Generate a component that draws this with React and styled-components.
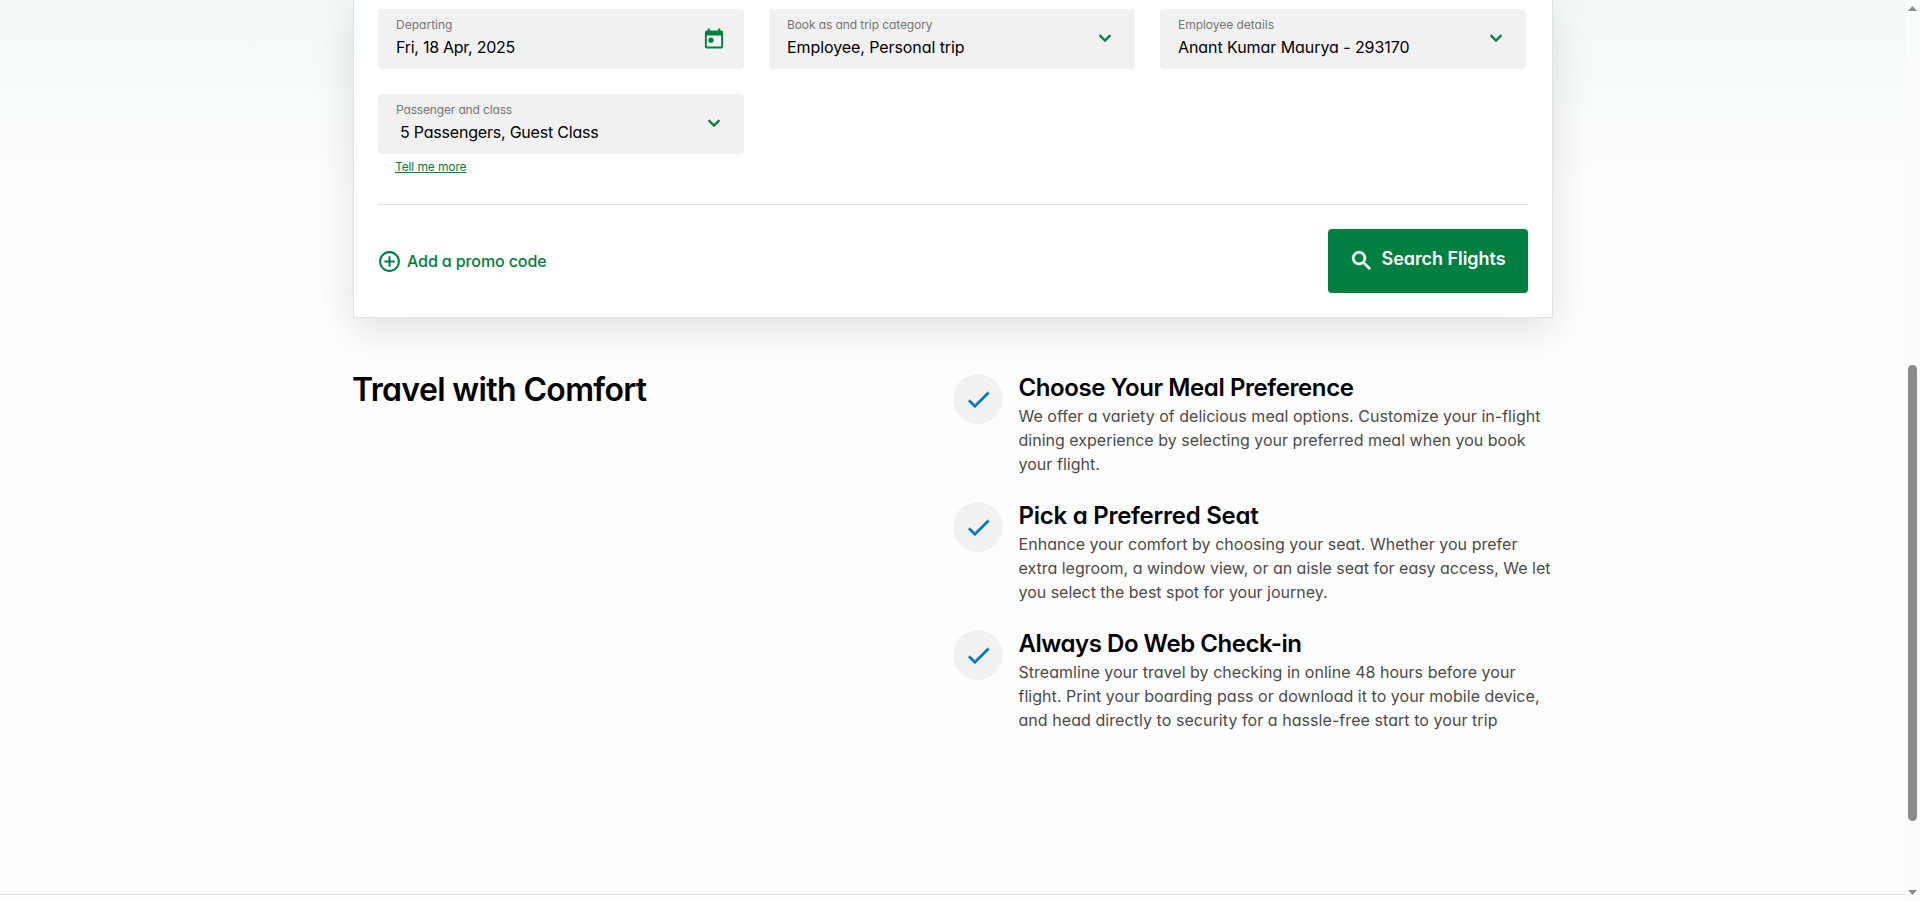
import React from 'react';
import styled, { createGlobalStyle } from 'styled-components';

const GlobalStyle = createGlobalStyle`
  * { box-sizing: border-box; }
  body {
    margin: 0;
    overflow: hidden;
    background: #fefefe;
    font-family: Inter, "Liberation Sans", sans-serif;
    font-feature-settings: "cv11";
    color: #000;
  }
`;

const Screen = styled.div`
  display: flex;
  height: 901px;
`;

const Page = styled.div`
  flex: 1;
  display: flex;
  flex-direction: column;
  background: linear-gradient(#f1f9f7 0, #f8fcfb 100px, #fefefe 200px);
`;

const Content = styled.main`
  width: 1200px;
  flex: 1;
  margin-left: 353px;
  display: flex;
  flex-direction: column;
`;

const Footer = styled.footer`
  height: 7px;
  border-top: 1px solid #e0e0e0;
`;

const Card = styled.section`
  height: 318px;
  padding: 9px 24px 24px;
  border: 1px solid #e3e3e3;
  border-top: 0;
  background: #fff;
  box-shadow: 0 12px 40px rgba(0, 0, 0, 0.12);
`;

const Fields = styled.div`
  display: grid;
  grid-template-columns: repeat(3, 366px);
  gap: 25px;
`;

const Field = styled.div`
  display: flex;
  justify-content: space-between;
  height: 60px;
  padding: 8px 18px;
  border-radius: 4px;
  background: #f1f1f1;
  white-space: nowrap;
`;

const FieldText = styled.div`
  display: flex;
  flex-direction: column;
  gap: 4px;
`;

const Label = styled.span`
  font-size: 12px;
  line-height: 16px;
  letter-spacing: ${(p) => p.$spacing}px;
  color: #757575;
`;

const Value = styled.span`
  font-size: 16px;
  line-height: 20px;
  letter-spacing: ${(p) => p.$spacing}px;
  padding-left: ${(p) => (p.$indent ? 4 : 0)}px;
`;

const FieldIcon = styled.svg`
  width: 24px;
  height: 24px;
  margin: ${(p) => (p.$raised ? 9 : 10)}px 0 0;
  fill: #008040;
  stroke: #008040;
  stroke-width: ${(p) => (p.$raised ? 0.4 : 0)};
`;

const TellMore = styled.a`
  display: block;
  width: max-content;
  margin: 5px 0 29px 17px;
  font-size: 12px;
  line-height: 16px;
  letter-spacing: -0.117px;
  color: #008040;
  text-decoration: underline;
  text-underline-offset: 1px;
`;

const Actions = styled.div`
  display: flex;
  align-items: center;
  justify-content: space-between;
  padding-top: 24px;
  border-top: 1px solid #e0e0e0;
`;

const Promo = styled.a`
  display: flex;
  align-items: center;
  gap: 5px;
  margin-left: -1px;
  font-size: 16px;
  font-weight: 500;
  line-height: 24px;
  letter-spacing: -0.105px;
  color: #008040;
`;

const PromoIcon = styled.svg`
  width: 25px;
  height: 25px;
  fill: #008040;
`;

const SearchButton = styled.button`
  display: flex;
  align-items: center;
  gap: 7px;
  width: 200px;
  height: 64px;
  padding: 0 0 0 21px;
  border: 0;
  border-radius: 4px;
  background: #008040;
  color: #fff;
  font: 600 18px/24px Inter, "Liberation Sans", sans-serif;
  font-feature-settings: "cv11";
  letter-spacing: -0.055px;
`;

const SearchLabel = styled.span`
  margin-bottom: 5px;
`;

const SearchIcon = styled.svg`
  width: 25.5px;
  height: 25.5px;
  fill: #fff;
  stroke: #fff;
  stroke-width: 0.6;
`;

const Comfort = styled.section`
  display: grid;
  grid-template-columns: 600px 600px;
  padding-top: 56px;
`;

const Title = styled.h2`
  margin: 0 0 0 -1px;
  font-size: 32px;
  font-weight: 600;
  line-height: 32px;
  letter-spacing: -0.64px;
`;

const Features = styled.div`
  display: flex;
  flex-direction: column;
  gap: 26px;
`;

const Feature = styled.article`
  display: flex;
  gap: 15.5px;
`;

const CheckCircle = styled.div`
  display: flex;
  flex: none;
  align-items: center;
  justify-content: center;
  width: 50px;
  height: 50px;
  padding-top: 1px;
  border-radius: 50%;
  background: #f1f1f1;
`;

const CheckIcon = styled.svg`
  width: 29px;
  height: 29px;
  fill: #0078be;
  stroke: #0078be;
  stroke-width: 0.3;
`;

const FeatureText = styled.div`
  display: flex;
  flex-direction: column;
  white-space: nowrap;
`;

const FeatureTitle = styled.h3`
  margin: 0 0 2px;
  font-size: 24px;
  font-weight: 600;
  line-height: 28px;
  letter-spacing: ${(p) => p.$spacing}px;
`;

const Line = styled.span`
  font-size: 16px;
  line-height: 24px;
  letter-spacing: ${(p) => p.$spacing}px;
  color: #4b4b4b;
`;

const ScrollTrack = styled.div`
  display: flex;
  flex-direction: column;
  align-items: center;
  width: 15px;
  padding: 6px 0 6px;
  background: #fcfcfc;
`;

const Arrow = styled.svg`
  width: 9px;
  height: 5px;
  margin-top: ${(p) => (p.$last ? 'auto' : 0)};
  fill: #8b8b8b;
`;

const Thumb = styled.div`
  width: 9px;
  height: 456px;
  margin-top: 354px;
  border-radius: 5px;
  background: #8b8b8b;
`;

const ChevronDown = () => (
  <FieldIcon $raised viewBox="0 0 24 24">
    <path d="M16.59 8.59 12 13.17 7.41 8.59 6 10l6 6 6-6z" />
  </FieldIcon>
);

const Calendar = () => (
  <FieldIcon viewBox="0 0 24 24">
    <path d="M19 3.6h-.8V1.4h-2v2.2H7.8V1.4h-2v2.2H5A2 2 0 0 0 2.9 5.6v13.9a2 2 0 0 0 2.1 2h14a2 2 0 0 0 2.1-2V5.6A2 2 0 0 0 19 3.6zm.2 16H4.8V8.6h14.4z" />
    <circle cx="9" cy="13.2" r="2.6" />
  </FieldIcon>
);

const fields = [
  { label: 'Departing', ls: 0.017, value: 'Fri, 18 Apr, 2025', vs: -0.262, Icon: Calendar },
  { label: 'Book as and trip category', ls: -0.088, value: 'Employee, Personal trip', vs: -0.081, Icon: ChevronDown },
  { label: 'Employee details', ls: -0.029, value: 'Anant Kumar Maurya - 293170', vs: -0.066, Icon: ChevronDown },
  { label: 'Passenger and class', ls: -0.152, value: '5 Passengers, Guest Class', vs: -0.208, indent: true, Icon: ChevronDown },
];

const features = [
  {
    title: 'Choose Your Meal Preference',
    spacing: -0.406,
    lines: [
      ['We offer a variety of delicious meal options. Customize your in-flight', 0.021],
      ['dining experience by selecting your preferred meal when you book', 0.01],
      ['your flight.', 0.038],
    ],
  },
  {
    title: 'Pick a Preferred Seat',
    spacing: -0.254,
    lines: [
      ['Enhance your comfort by choosing your seat. Whether you prefer', 0.035],
      ['extra legroom, a window view, or an aisle seat for easy access, We let', -0.014],
      ['you select the best spot for your journey.', -0.021],
    ],
  },
  {
    title: 'Always Do Web Check-in',
    spacing: -0.472,
    lines: [
      ['Streamline your travel by checking in online 48 hours before your', 0.031],
      ['flight. Print your boarding pass or download it to your mobile device,', 0.035],
      ['and head directly to security for a hassle-free start to your trip', 0.059],
    ],
  },
];

export default function App() {
  return (
    <Screen>
      <GlobalStyle />
      <Page>
        <Content>
          <Card>
            <Fields>
              {fields.map(({ label, ls, value, vs, indent, Icon }) => (
                <Field key={label}>
                  <FieldText>
                    <Label $spacing={ls}>{label}</Label>
                    <Value $spacing={vs} $indent={indent}>{value}</Value>
                  </FieldText>
                  <Icon />
                </Field>
              ))}
            </Fields>
            <TellMore>Tell me more</TellMore>
            <Actions>
              <Promo>
                <PromoIcon viewBox="0 0 24 24">
                  <path d="M13 7h-2v4H7v2h4v4h2v-4h4v-2h-4V7zm-1-5C6.48 2 2 6.48 2 12s4.480 10 10 10 10-4.480 10-10S17.520 2 12 2zm0 18c-4.410 0-8-3.590-8-8s3.590-8 8-8 8 3.590 8 8-3.590 8-8 8z" />
                </PromoIcon>
                Add a promo code
              </Promo>
              <SearchButton>
                <SearchIcon viewBox="0 0 24 24">
                  <path d="M15.5 14h-.79l-.28-.27A6.471 6.471 0 0 0 16 9.5 6.5 6.5 0 1 0 9.5 16c1.61 0 3.09-.59 4.23-1.57l.27.28v.79l5 4.99L20.49 19l-4.99-5zm-6 0C7.01 14 5 11.99 5 9.5S7.01 5 9.5 5 14 7.01 14 9.5 11.99 14 9.5 14z" />
                </SearchIcon>
                <SearchLabel>Search Flights</SearchLabel>
              </SearchButton>
            </Actions>
          </Card>
          <Comfort>
            <Title>Travel with Comfort</Title>
            <Features>
              {features.map((feature) => (
                <Feature key={feature.title}>
                  <CheckCircle>
                    <CheckIcon viewBox="0 0 24 24">
                      <path d="M9 16.17 4.83 12l-1.42 1.41L9 19 21 7l-1.41-1.41z" />
                    </CheckIcon>
                  </CheckCircle>
                  <FeatureText>
                    <FeatureTitle $spacing={feature.spacing}>{feature.title}</FeatureTitle>
                    {feature.lines.map(([text, spacing]) => (
                      <Line key={text} $spacing={spacing}>{text}</Line>
                    ))}
                  </FeatureText>
                </Feature>
              ))}
            </Features>
          </Comfort>
        </Content>
        <Footer />
      </Page>
      <ScrollTrack>
        <Arrow viewBox="0 0 9 5"><path d="M4.5 0 9 5H0z" /></Arrow>
        <Thumb />
        <Arrow $last viewBox="0 0 9 5"><path d="M0 0h9L4.5 5z" /></Arrow>
      </ScrollTrack>
    </Screen>
  );
}
